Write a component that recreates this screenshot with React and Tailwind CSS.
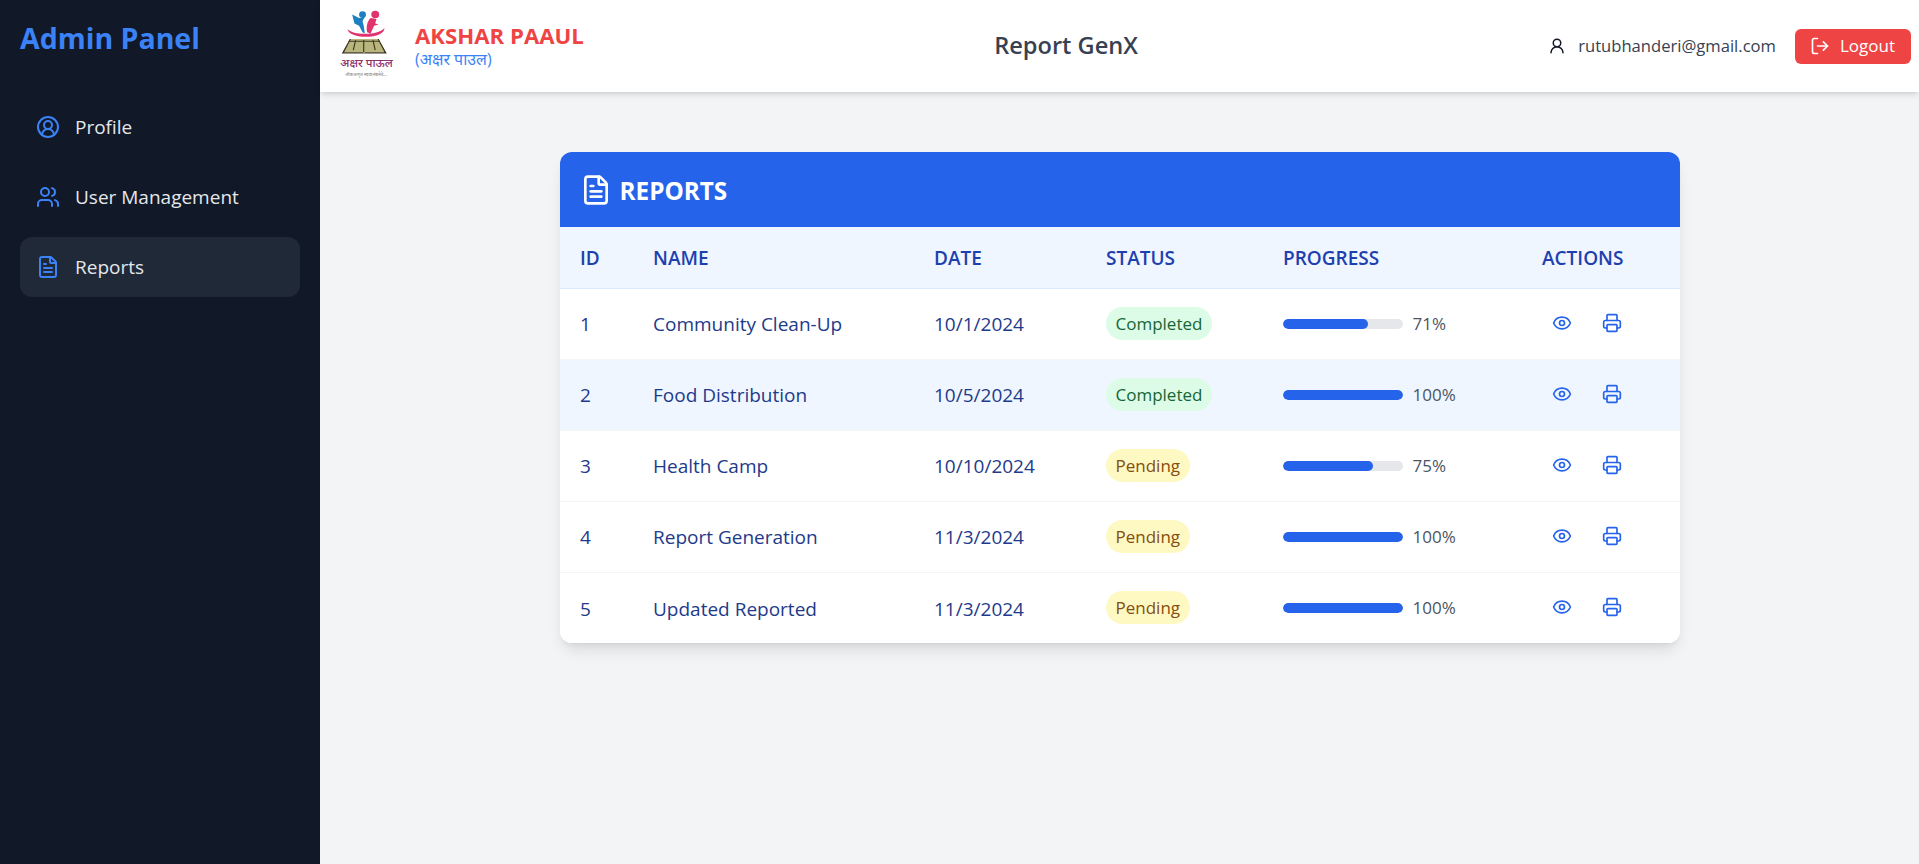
import React from 'react';
import { CircleUserRound, Users, FileText, UserRound, LogOut, Eye, Printer } from 'lucide-react';

const rows = [
  [1, 'Community Clean-Up', '10/1/2024', 'Completed', 71],
  [2, 'Food Distribution', '10/5/2024', 'Completed', 100],
  [3, 'Health Camp', '10/10/2024', 'Pending', 75],
  [4, 'Report Generation', '11/3/2024', 'Pending', 100],
  [5, 'Updated Reported', '11/3/2024', 'Pending', 100],
];

function Logo() {
  return (
    <svg width="60" height="70" viewBox="8 2 52 63" preserveAspectRatio="none" className="shrink-0 mb-1">
      <path d="M18 20c5 6 26 6 32-1 0 5-7 8-16 8s-16-3-16-7z" fill="#e0336f" />
      <circle cx="31" cy="7" r="3" fill="#1b7fc0" />
      <path d="M22 7l6 3 5-1-2 4 1 4 1 7-2-1-3-6-4-2-1-4z" fill="#1b7fc0" />
      <circle cx="42" cy="7" r="3.4" fill="#e0336f" />
      <path d="M35 23c-1-5 0-10 3-13l5 1-1 4 3 1-4 1-3 7z" fill="#e0336f" />
      <path d="M20 29h25l6 12H14z" fill="#b8b67c" />
      <path d="M32 30v11M25 30l-2 9M40 30l2 9M19 31h27" stroke="#3f3a20" strokeWidth="1" fill="none" />
      <path d="M20 29l-7 13h19l1-1H15l6-12zM45 29l7 13H32v-1h18l-6-12z" fill="#3b3220" />
      <text x="34.5" y="54" textAnchor="middle" fontSize="10" fontWeight="500" fill="#8e2f6e" fontFamily="'Noto Sans Devanagari','Noto Sans',sans-serif">अक्षर पाऊल</text>
      <text x="34" y="62" textAnchor="middle" fontSize="4" fill="#777" fontFamily="'Noto Sans Devanagari','Noto Sans',sans-serif">लोकजागृत स्वावलंबनेते...</text>
    </svg>
  );
}

function Nav({ icon: Icon, label, active }) {
  return (
    <div className={`flex items-center h-[60px] rounded-xl px-4 gap-[15px] text-[19px] text-[#e5e7eb] ${active ? 'bg-[#1f2937]' : ''}`}>
      <Icon size={24} className="text-[#3b82f6] shrink-0" />
      <span className="pt-px">{label}</span>
    </div>
  );
}

export default function App() {
  return (
    <div className="flex h-[864px] w-full overflow-hidden bg-[#f3f4f6] font-['Open_Sans','Noto_Sans',sans-serif]">
      <aside className="w-[320px] shrink-0 bg-[#111827] p-5">
        <h1 className="text-[28.5px] leading-9 font-bold text-[#3b82f6]">Admin Panel</h1>
        <nav className="mt-[41px] flex flex-col gap-2.5">
          <Nav icon={CircleUserRound} label="Profile" />
          <Nav icon={Users} label="User Management" />
          <Nav icon={FileText} label="Reports" active />
        </nav>
      </aside>
      <div className="flex-1 min-w-0 flex flex-col">
        <header className="relative h-[92px] bg-white shadow-md flex items-center justify-between pl-[16px] pr-2">
          <div className="flex items-center gap-[19px]">
            <Logo />
            <div className="mb-[3px]">
              <div className="text-[22.2px] leading-7 font-bold text-[#ef4444]">AKSHAR PAAUL</div>
              <div className="text-base leading-[18px] text-[#3b82f6]">(अक्षर पाउल)</div>
            </div>
          </div>
          <div className="text-[23.6px] font-semibold text-[#374151]">Report GenX</div>
          <div className="flex items-center">
            <UserRound size={18} className="text-[#111827]" />
            <span className="ml-3 text-[16.6px] text-[#374151]">rutubhanderi@gmail.com</span>
            <button className="ml-[19px] flex items-center gap-2.5 h-[35px] pl-[15px] pr-4 rounded-md bg-[#ef4444] text-white text-[17px]">
              <LogOut size={20} />
              Logout
            </button>
          </div>
        </header>
        <main className="flex-1 flex justify-center pt-[60px]">
          <div className="w-[1120px] self-start rounded-xl bg-white shadow-lg overflow-hidden">
            <div className="h-[75px] bg-[#2563eb] flex items-center px-5 gap-2 text-white">
              <FileText size={32} />
              <h2 className="text-[24.3px] font-bold pt-[3px]">REPORTS</h2>
            </div>
            <table className="w-full table-fixed border-collapse">
              <colgroup>
                <col className="w-[73px]" />
                <col className="w-[281px]" />
                <col className="w-[172px]" />
                <col className="w-[177px]" />
                <col className="w-[259px]" />
                <col className="w-[158px]" />
              </colgroup>
              <thead>
                <tr className="h-[61px] bg-[#eff6ff] border-b border-[#dbeafe] text-[#1e40af] text-[19px] text-left">
                  {['ID', 'NAME', 'DATE', 'STATUS', 'PROGRESS', 'ACTIONS'].map((h) => (
                    <th key={h} className="pl-[20.5px] pt-0.5 font-semibold">{h}</th>
                  ))}
                </tr>
              </thead>
              <tbody>
                {rows.map(([id, name, date, status, pct], i) => (
                  <tr key={id} className={`h-[71px] text-[19px] text-[#1e3a8a] border-b border-[#f3f4f6] last:border-b-0 ${i === 1 ? 'bg-[#eff6ff]' : 'bg-white'}`}>
                    <td className="pl-[20.5px] pt-0.5">{id}</td>
                    <td className="pl-[20.5px] pt-0.5">{name}</td>
                    <td className="pl-[20.5px] pt-0.5">{date}</td>
                    <td className="px-5">
                      <span className={`inline-block rounded-full px-2.5 h-[33px] leading-[33px] text-[17px] ${status === 'Completed' ? 'bg-[#dcfce7] text-[#166534]' : 'bg-[#fef9c3] text-[#854d0e]'}`}>{status}</span>
                    </td>
                    <td className="px-5">
                      <div className="flex items-center gap-2.5">
                        <div className="w-[120px] h-2.5 rounded-full bg-[#e5e7eb] overflow-hidden">
                          <div className="h-full rounded-full bg-[#2563eb]" style={{ width: `${pct}%` }} />
                        </div>
                        <span className="text-[17px] text-[#4b5563]">{pct}%</span>
                      </div>
                    </td>
                    <td className="pl-[22px]">
                      <div className="flex items-center gap-[14px] text-[#2563eb] mb-0.5">
                        <button className="p-2"><Eye size={20} /></button>
                        <button className="p-2"><Printer size={20} /></button>
                      </div>
                    </td>
                  </tr>
                ))}
              </tbody>
            </table>
          </div>
        </main>
      </div>
    </div>
  );
}
